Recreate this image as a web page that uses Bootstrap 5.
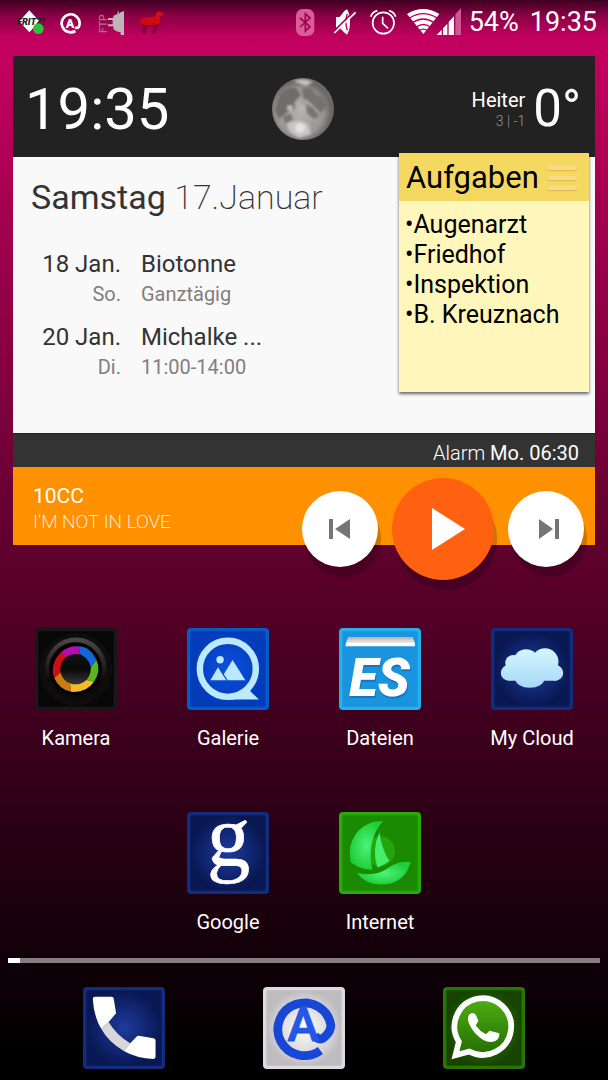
<!DOCTYPE html>
<html lang="de">
<head>
<meta charset="utf-8">
<meta name="viewport" content="width=device-width, initial-scale=1">
<title>Startbildschirm</title>
<link href="https://cdn.jsdelivr.net/npm/bootstrap@5.3.0/dist/css/bootstrap.min.css" rel="stylesheet">
<style>
  body {
    font-family: Roboto, "Liberation Sans", sans-serif;
    min-height: 100vh;
    color: #fff;
    background: linear-gradient(#3d0020 0, #8c0046 16px, #c0005e 36px, #c4005f 56px, #60002e 545px, #000 1050px) #000;
  }
  svg { display: block; flex: none; overflow: visible; }
  .status-bar { height: 44px; padding: 0 11px 0 17px; font-size: 27px; line-height: 44px; }
  .status-left { gap: 15px; }
  .status-right { gap: 11px; }
  .widget { margin: 12px 13px 0; }
  .clock-head { background: #222; height: 101px; padding: 4px 14px 0 12px; }
  .clock-time { font-size: 58px; line-height: 64px; }
  .sky { font-size: 20px; line-height: 24px; }
  .sky-range { font-size: 14px; line-height: 18px; color: #999; }
  .temperature { font-size: 51px; line-height: 64px; }
  .agenda { background: #f9f9f9; color: #333; min-height: 276px; padding: 20px 18px; }
  .agenda-title { font-size: 34px; line-height: 40px; margin: 0 0 32px; font-weight: 400; }
  .thin { font-weight: 200; }
  .event { gap: 20px; margin-bottom: 13px; font-size: 24px; line-height: 30px; }
  .event-day { width: 90px; text-align: right; }
  .event-sub { font-size: 20px; color: #857c7c; }
  .sticky-note { top: -4px; right: 6px; width: 190px; height: 239px; background: #fef6ba; color: #000; box-shadow: 0 2px 3px #0009; z-index: 2; }
  .note-head { background: #f5d860; height: 48px; padding: 2px 12px 0 7px; }
  .note-head h2 { font-size: 31px; line-height: 46px; margin: 0; font-weight: 400; }
  .note-menu i { display: block; width: 30px; height: 4px; margin: 6px 0; border-radius: 2px; background: #f6dc85; box-shadow: 0 1px 1px #e0b84a; }
  .note-list { font-size: 25px; line-height: 30px; padding: 9px 6px; margin: 0; }
  .alarm-bar { background: #333; height: 34px; padding: 4px 16px 0; font-size: 20px; line-height: 30px; border-top: 1px solid #222; }
  .player { background: #ff9100; height: 78px; padding: 16px 20px; }
  .artist { font-size: 21px; line-height: 26px; }
  .song { font-size: 19px; line-height: 26px; font-weight: 200; }
  .player-controls { top: 11px; right: 11px; gap: 14px; }
  .round { border: 0; padding: 0; width: 76px; height: 76px; border-radius: 50%; background: #fff; box-shadow: 3px 10px 1px #0003; display: flex; align-items: center; justify-content: center; }
  .round-play { width: 102px; height: 102px; background: #ff6110; }
  .apps { display: grid; grid-template-columns: repeat(4, 1fr); row-gap: 62px; margin-top: 83px; }
  .app { color: #fff; text-decoration: none; display: flex; flex-direction: column; align-items: center; gap: 16px; font-size: 20px; line-height: 24px; }
  .second-row { grid-column-start: 2; }
  .app svg, .dock svg { width: 82px; height: 82px; }
  .pager { height: 5px; margin: 24px 8px; background: #857c7c; }
  .pager div { background: #fff; width: 12px; }
  .dock { padding: 0 34px 12px; }
</style>
</head>
<body>
<header class="status-bar d-flex justify-content-between align-items-center">
  <div class="status-left d-flex align-items-center">
    <svg width="28" height="27" viewBox="51 24 84 81" aria-hidden="true">
      <path d="M88 28 118 61 88 94 58 61Z" fill="#fff"/>
      <text x="51" y="72" font-size="28" font-weight="900" font-style="italic" fill="#222">FRITZ!</text>
      <circle cx="115" cy="83" r="16" fill="#2bc23e"/>
    </svg>
    <svg width="21" height="27" viewBox="180 24 63 81" fill="none" stroke="#fff" stroke-width="8" aria-hidden="true">
      <path d="M225 80Q239 84 239 67A27 27 0 1 0 226 90"/>
      <text x="197" y="80" font-size="38" font-weight="900" fill="#fff" stroke="none">A</text>
    </svg>
    <svg width="30" height="27" viewBox="288 24 90 81" aria-hidden="true">
      <text transform="translate(322 96) rotate(-90)" font-size="31" font-weight="500" fill="#a8718c">FTP</text>
      <path d="M372 30V102H362V94Q344 92 340 82V76H324V70H338V57H324V51H340V45Q348 40 352 40L354 28 358 38 362 34Z" fill="#bdb5b9"/>
    </svg>
    <svg width="23" height="27" viewBox="423 24 69 81" aria-hidden="true">
      <path d="M426 62H478L466 98H456L460 76 440 75 438 98H427Z" fill="#850035"/>
      <path d="M470 34 478 30 481 34 489 37V44L481 46 478 68Q450 75 422 69L419 62 427 52 465 48Z" fill="#d90b0b"/>
      <path d="M423 58H476M424 67H474" stroke="#a9001c" stroke-width="2" stroke-dasharray="5 3"/>
    </svg>
  </div>
  <div class="status-right d-flex align-items-center">
    <svg width="30" height="27" viewBox="-6 21 90 81" aria-hidden="true">
      <rect x="12" y="21" width="55" height="81" rx="20" fill="#d75c98"/>
      <path d="M24 48 54 74 40 87V35L54 48 24 75" fill="none" stroke="#a30050" stroke-width="5"/>
    </svg>
    <svg width="28" height="27" viewBox="120 24 84 81" aria-hidden="true">
      <path d="M135 48H146L160 30 168 25Q177 38 177 63T168 101L159 94 146 80H135Z" fill="#fff"/>
      <path d="M169 38Q160 61 169 88" fill="none" stroke="#b40057" stroke-width="4"/>
      <path d="M127 92 190 30" stroke="#b40057" stroke-width="5"/>
      <path d="M130 96 194 34" stroke="#fff" stroke-width="5"/>
    </svg>
    <svg width="26" height="27" viewBox="243 24 78 81" fill="none" stroke="#fff" stroke-width="5" aria-hidden="true">
      <circle cx="283" cy="66" r="32"/><path d="M281 47V67L297 82M245 47Q250 33 265 29M320 47Q315 33 300 29"/>
    </svg>
    <svg width="51" height="27" viewBox="354 24 153 81" aria-hidden="true">
      <path d="M354 39Q402 9 451 39L403 99Z" fill="#fff"/>
      <path d="M360 52Q403 24 446 52M370 65Q403 43 436 65M382 78Q403 63 424 78M390 89Q403 80 416 89" fill="none" stroke="#b80059" stroke-width="4"/>
      <path d="M443 102 458 86V102ZM462 82 475 68V102H462ZM479 63 495 46V102H479Z" fill="#fff"/>
      <path d="M499 40 516 21V102H499Z" fill="#cf5691"/>
    </svg>
    <span>54%</span>
    <span>19:35</span>
  </div>
</header>

<main>
  <section class="widget">
    <div class="clock-head d-flex align-items-center">
      <div class="clock-time col">19:35</div>
      <svg width="64" height="64" viewBox="0 0 64 64" role="img" aria-label="Vollmond">
        <defs>
          <radialGradient id="moon" cx=".45" cy=".55"><stop offset="0" stop-color="#b5b3b1"/><stop offset=".75" stop-color="#999795"/><stop offset="1" stop-color="#6a6868"/></radialGradient>
          <filter id="soft"><feGaussianBlur stdDeviation="1"/></filter>
          <clipPath id="disc"><circle cx="32" cy="32" r="31"/></clipPath>
        </defs>
        <circle cx="32" cy="32" r="31" fill="url(#moon)"/>
        <g clip-path="url(#disc)"><g filter="url(#soft)">
          <path d="M7 22Q12 9 25 11L30 18 23 25 24 32 15 36 8 42 4 33Z" fill="#6e6c6c"/>
          <path d="M31 12Q41 8 44 17L51 20 56 29 50 36 43 29 38 24 32 21Z" fill="#747272"/>
          <path d="M35 27 42 31 48 39 43 42 36 36ZM12 39 20 37 22 43 14 46ZM50 16 55 20 54 24Z" fill="#777575"/>
          <path d="M16 47Q27 40 37 47L40 57 28 61 19 55Z" fill="#c8c5c3"/>
          <circle cx="29" cy="51" r="5" fill="#e4e2e0"/><circle cx="19" cy="31" r="3" fill="#bcb9b8"/>
          <path d="M22 4Q33 0 42 5L35 9Z" fill="#c1c0be"/><path d="M27 25 34 31 30 36Z" fill="#bbb9b7"/>
        </g></g>
      </svg>
      <div class="col d-flex justify-content-end align-items-center gap-2">
        <div class="text-end">
          <div class="sky">Heiter</div>
          <div class="sky-range fw-light">3 | -1</div>
        </div>
        <div class="temperature">0°</div>
      </div>
    </div>

    <div class="agenda position-relative">
      <h1 class="agenda-title">Samstag <span class="thin">17.Januar</span></h1>
      <div class="event d-flex">
        <div class="event-day"><div>18 Jan.</div><div class="event-sub">So.</div></div>
        <div><div>Biotonne</div><div class="event-sub">Ganztägig</div></div>
      </div>
      <div class="event d-flex">
        <div class="event-day"><div>20 Jan.</div><div class="event-sub">Di.</div></div>
        <div><div>Michalke ...</div><div class="event-sub">11:00-14:00</div></div>
      </div>
      <aside class="sticky-note position-absolute">
        <div class="note-head d-flex justify-content-between align-items-center">
          <h2>Aufgaben</h2>
          <button class="note-menu border-0 bg-transparent p-0" aria-label="Menü"><i></i><i></i><i></i></button>
        </div>
        <ul class="note-list list-unstyled">
          <li>•Augenarzt</li><li>•Friedhof</li><li>•Inspektion</li><li>•B. Kreuznach</li>
        </ul>
      </aside>
    </div>

    <div class="alarm-bar text-end"><span class="fw-light">Alarm</span> Mo. 06:30</div>

    <div class="player position-relative">
      <div class="artist">10CC</div>
      <div class="song">I'M NOT IN LOVE</div>
      <div class="player-controls position-absolute d-flex align-items-center">
        <button class="round" aria-label="Zurück"><svg width="22" height="22" viewBox="0 0 22 22" fill="#757575"><path d="M0 1H4V21H0ZM21 1V21L6 11Z"/></svg></button>
        <button class="round round-play" aria-label="Wiedergabe"><svg width="22" height="42" viewBox="0 0 22 42" fill="#fff"><path d="M0 0 33 21 0 42Z"/></svg></button>
        <button class="round" aria-label="Weiter"><svg width="16" height="22" viewBox="0 0 16 22" fill="#757575"><path d="M1 1V21L15 11ZM17 1H21V21H17Z"/></svg></button>
      </div>
    </div>
  </section>

  <nav class="apps" aria-label="Apps">
    <a class="app" href="#">
      <svg viewBox="47 39 243 243" aria-hidden="true">
        <defs>
          <linearGradient id="lens" x2="0" y2="1"><stop offset="0" stop-color="#504848"/><stop offset=".7" stop-color="#0b0a0a"/></linearGradient>
          <linearGradient id="core" x2="0" y2="1"><stop offset="0" stop-color="#111"/><stop offset=".5" stop-color="#090909"/><stop offset="1" stop-color="#373737"/></linearGradient>
        </defs>
        <rect x="47" y="39" width="243" height="243" rx="12" fill="#191717"/><rect x="57" y="49" width="223" height="223" rx="4" fill="#080707"/>
        <circle cx="168" cy="161" r="108" fill="#0e0c0c"/><circle cx="168" cy="158" r="91" fill="url(#lens)"/><circle cx="167" cy="159" r="78" fill="#000"/>
        <path d="M125 110Q146 91 175 93L182 118 136 128Z" fill="#b80bb0"/>
        <path d="M175 93Q212 94 229 134L213 154 182 118Z" fill="#1268d8"/>
        <path d="M229 134Q244 166 222 198L200 193 213 154Z" fill="#58b81a"/>
        <path d="M222 198Q198 232 154 228L150 202 200 193Z" fill="#f3bb25"/>
        <path d="M154 228Q120 222 104 187L123 170 151 202Z" fill="#cc7c0d"/>
        <path d="M104 187Q89 145 125 110L139 125 123 170Z" fill="#cb1015"/>
        <circle cx="167" cy="161" r="45" fill="url(#core)"/>
      </svg>Kamera</a>
    <a class="app" href="#">
      <svg viewBox="502 39 243 243" aria-hidden="true">
        <defs><radialGradient id="royal"><stop offset="0" stop-color="#0b50e0"/><stop offset="1" stop-color="#033bb9"/></radialGradient></defs>
        <rect x="502" y="39" width="243" height="243" rx="12" fill="#075bc8"/><rect x="512" y="49" width="223" height="223" rx="4" fill="url(#royal)"/>
        <circle cx="623" cy="160" r="83" fill="none" stroke="#bce9fd" stroke-width="19"/>
        <path d="M625 251H715L689 226 698 207 678 215Q657 242 625 243Z" fill="#bce9fd"/>
        <circle cx="600" cy="133" r="11" fill="#bce9fd"/><path d="M571 194 594 155 608 178 619 194ZM611 176 637 134 675 194H623Z" fill="#bce9fd"/>
      </svg>Galerie</a>
    <a class="app" href="#">
      <svg viewBox="58 39 243 243" aria-hidden="true">
        <rect x="58" y="39" width="243" height="243" rx="12" fill="#24b0eb"/><rect x="68" y="49" width="223" height="223" rx="4" fill="#1b94df"/>
        <path d="M85 66H278V78H82Z" fill="#c4b8b7"/><path d="M82 73H280L282 84H79Z" fill="#ded7d6"/><path d="M79 82H283V93H77Z" fill="#fff"/>
        <g font-size="156" font-weight="900" font-style="italic" text-anchor="middle"><text x="180" y="245" fill="#1775bd" aria-hidden="true">ES</text><text x="178" y="242" fill="#fff">ES</text></g>
      </svg>Dateien</a>
    <a class="app" href="#">
      <svg viewBox="515 39 243 243" aria-hidden="true">
        <defs>
          <radialGradient id="navy"><stop offset="0" stop-color="#1e3c9c"/><stop offset=".65" stop-color="#10246f"/><stop offset="1" stop-color="#091852"/></radialGradient>
          <linearGradient id="cloud" gradientUnits="userSpaceOnUse" x1="0" x2="0" y1="100" y2="216"><stop offset="0" stop-color="#d4f7ff"/><stop offset="1" stop-color="#a7d7f6"/></linearGradient>
        </defs>
        <rect x="515" y="39" width="243" height="243" rx="12" fill="#122d7d"/><rect x="525" y="49" width="223" height="223" rx="4" fill="url(#navy)"/>
        <g fill="url(#cloud)">
          <circle cx="567" cy="172" r="23"/><circle cx="581" cy="143" r="24"/><circle cx="619" cy="140" r="38"/><circle cx="675" cy="139" r="40"/><circle cx="706" cy="172" r="23"/>
          <path d="M564 130H700L710 195H567Z"/><ellipse cx="630" cy="190" rx="43" ry="26"/>
        </g>
      </svg>My Cloud</a>
    <a class="app second-row" href="#">
      <svg viewBox="53 39 243 243" aria-hidden="true">
        <rect x="53" y="39" width="243" height="243" rx="12" fill="#122d7d"/><rect x="63" y="49" width="223" height="223" rx="4" fill="url(#navy)"/>
        <text x="176" y="196" text-anchor="middle" font-family="Liberation Serif, serif" font-size="256" fill="#fff" stroke="#fff" stroke-width="2">g</text>
      </svg>Google</a>
    <a class="app" href="#">
      <svg viewBox="508 39 243 243" aria-hidden="true">
        <defs><radialGradient id="sail"><stop offset="0" stop-color="#4cf37b"/><stop offset="1" stop-color="#20ce38"/></radialGradient></defs>
        <rect x="508" y="39" width="243" height="243" rx="12" fill="#2aa90a"/><rect x="518" y="49" width="223" height="223" rx="4" fill="#1a8a03"/>
        <circle cx="630" cy="155" r="44" fill="#25a40c"/>
        <path d="M638 66Q588 126 607 210 573 211 543 188 532 139 558 104 587 66 638 66Z" fill="url(#sail)"/>
        <path d="M628 99Q634 148 657 184 645 194 622 204 604 150 628 99Z" fill="#45ee6d"/>
        <path d="M561 220Q617 231 652 206 685 181 720 188 707 236 664 250 597 266 561 220Z" fill="url(#sail)"/>
      </svg>Internet</a>
  </nav>

  <div class="pager progress rounded-0" role="progressbar" aria-label="Seite" aria-valuenow="2" aria-valuemin="0" aria-valuemax="100"><div></div></div>
</main>

<footer class="dock d-flex">
  <a class="col d-flex justify-content-center" href="#" aria-label="Telefon">
    <svg viewBox="250 126 243 243" aria-hidden="true">
      <rect x="250" y="126" width="243" height="243" rx="12" fill="#122d7d"/><rect x="260" y="136" width="223" height="223" rx="4" fill="url(#navy)"/>
      <path d="M304 250 326 230Q349 269 390 293L371 316Q326 290 304 250Z" fill="#d8d6d8"/>
      <path d="M285 155H335Q340 155 341 160L348 204 326 230 304 250Q282 213 279 162 279 155 285 155ZM371 316 390 293 410 272Q413 269 419 271L459 278Q465 279 465 285V333Q465 339 459 339 409 338 371 316Z" fill="#fff"/>
    </svg></a>
  <a class="col d-flex justify-content-center" href="#" aria-label="E-Mail">
    <svg viewBox="-122 126 243 243" aria-hidden="true">
      <defs><radialGradient id="silver"><stop offset="0" stop-color="#fff"/><stop offset=".8" stop-color="#d2cfd2"/><stop offset="1" stop-color="#bfbcc0"/></radialGradient></defs>
      <rect x="-122" y="126" width="243" height="243" rx="12" fill="#dddbdd"/><rect x="-112" y="136" width="223" height="223" rx="4" fill="url(#silver)"/>
      <path d="M31 268Q44 290 63 272 79 256 79 239A79 78 0 1 0 48 314" fill="none" stroke="#1847d8" stroke-width="26"/>
      <text x="-3" y="286" text-anchor="middle" font-size="140" font-weight="500" fill="#2457e6" stroke="#2457e6" stroke-width="3">A</text>
    </svg></a>
  <a class="col d-flex justify-content-center" href="#" aria-label="WhatsApp">
    <svg viewBox="420 126 243 243" aria-hidden="true">
      <defs>
        <radialGradient id="forest"><stop offset="0" stop-color="#368e0a"/><stop offset="1" stop-color="#174500"/></radialGradient>
        <linearGradient id="bubble" x2="0" y2="1"><stop offset="0" stop-color="#4fae14"/><stop offset="1" stop-color="#246d00"/></linearGradient>
      </defs>
      <rect x="420" y="126" width="243" height="243" rx="12" fill="#297505"/><rect x="430" y="136" width="223" height="223" rx="4" fill="url(#forest)"/>
      <path d="M457 328 467 288A84 84 0 1 1 498 317Z" fill="url(#bubble)" stroke="#fff" stroke-width="17"/>
      <path d="M497 208Q508 198 517 208L525 226 517 240Q529 257 547 266L558 256 587 263Q588 279 575 286 548 298 516 264 486 229 497 208Z" fill="#fff"/>
    </svg></a>
</footer>
<script src="https://cdn.jsdelivr.net/npm/bootstrap@5.3.0/dist/js/bootstrap.bundle.min.js"></script>
</body>
</html>
